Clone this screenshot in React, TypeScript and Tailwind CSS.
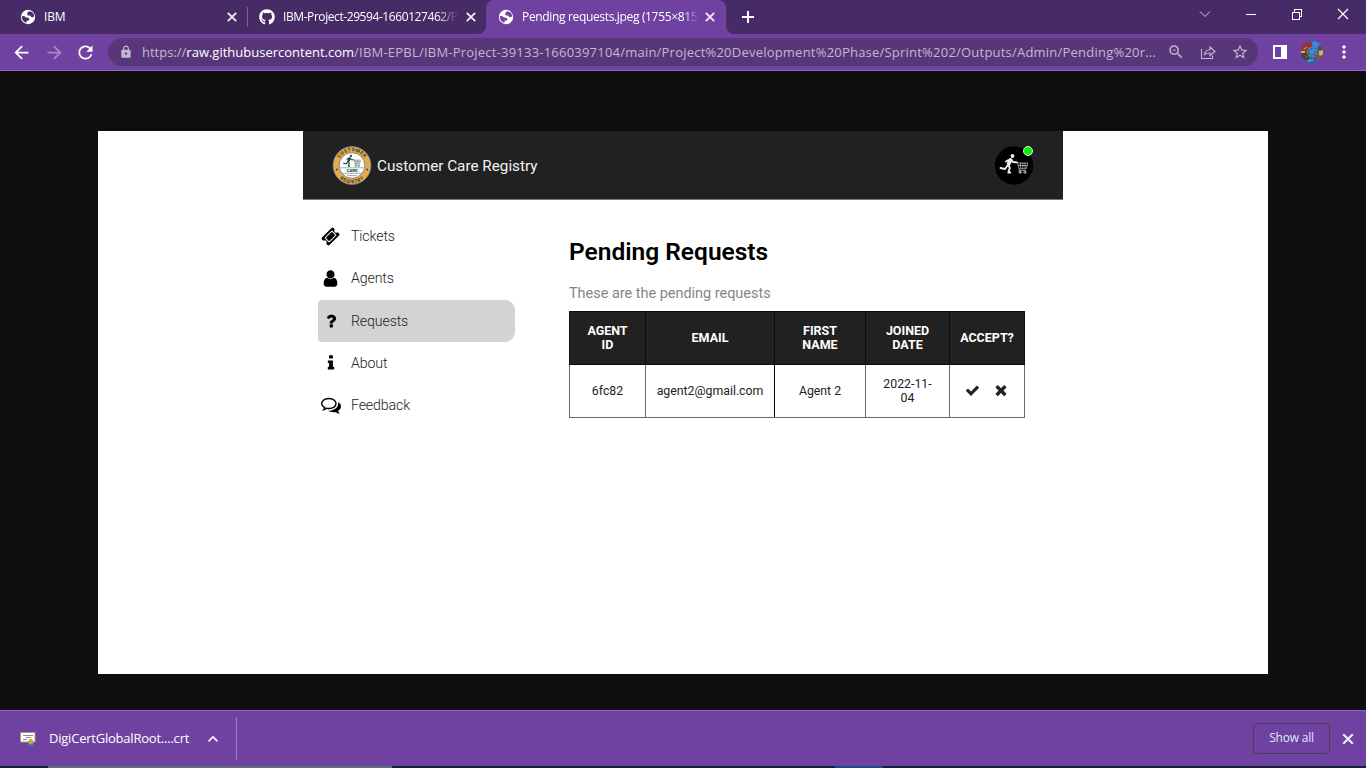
import React from "react";
import {
  MdArrowBack,
  MdArrowForward,
  MdRefresh,
  MdLock,
  MdStarBorder,
  MdZoomOut,
  MdMoreVert,
} from "react-icons/md";
import { FaGithub } from "react-icons/fa";

const ICONS = {
  check:
    "M1671 566q0 40-28 68l-724 724-136 136q-28 28-68 28t-68-28l-136-136-362-362q-28-28-28-68t28-68l136-136q28-28 68-28t68 28l294 295 656-657q28-28 68-28t68 28l136 136q28 28 28 68z",
  times:
    "M1490 1322q0 40-28 68l-136 136q-28 28-68 28t-68-28l-294-294-294 294q-28 28-68 28t-68-28l-136-136q-28-28-28-68t28-68l294-294-294-294q-28-28-28-68t28-68l136-136q28-28 68-28t68 28l294 294 294-294q28-28 68-28t68 28l136 136q28 28 28 68t-28 68l-294 294 294 294q28 28 28 68z",
  ticket:
    "M1024 452l316 316-572 572-316-316zm-211 979l618-618q19-19 19-45t-19-45l-362-362q-18-18-45-18t-45 18l-618 618q-19 19-19 45t19 45l362 362q18 18 45 18t45-18zm889-637l-907 908q-37 37-90.5 37t-90.5-37l-126-126q56-56 56-136t-56-136-136-56-136 56l-125-126q-37-37-37-90.5t37-90.5l907-906q37-37 90.5-37t90.5 37l125 125q-56 56-56 136t56 136 136 56 136-56l126 125q37 37 37 90.5t-37 90.5z",
  user:
    "M1536 1399q0 109-62.5 187t-150.5 78h-854q-88 0-150.5-78t-62.5-187q0-85 8.5-160.5t31.5-152 58.5-131 94-89 134.5-34.5q131 128 313 128t313-128q76 0 134.5 34.5t94 89 58.5 131 31.5 152 8.5 160.5zm-256-887q0 159-112.5 271.5t-271.5 112.5-271.5-112.5-112.5-271.5 112.5-271.5 271.5-112.5 271.5 112.5 112.5 271.5z",
  question:
    "M1088 1256v240q0 16-12 28t-28 12h-240q-16 0-28-12t-12-28v-240q0-16 12-28t28-12h240q16 0 28 12t12 28zm316-600q0 54-15.5 101t-35 76.5-55 59.5-57.5 43.5-61 35.5q-41 23-68.5 65t-27.5 67q0 17-12 32.5t-28 15.5h-240q-15 0-25.5-18.5t-10.5-37.5v-45q0-83 65-156.5t143-108.5q59-27 84-56t25-76q0-42-46.5-74t-107.5-32q-65 0-108 29-35 25-107 115-13 16-31 16-12 0-25-8l-164-125q-13-10-15.5-25t5.5-28q160-266 464-266 80 0 161 31t146 83 106 127.5 41 158.5z",
  info:
    "M1216 1344v128q0 26-19 45t-45 19h-512q-26 0-45-19t-19-45v-128q0-26 19-45t45-19h64v-384h-64q-26 0-45-19t-19-45v-128q0-26 19-45t45-19h384q26 0 45 19t19 45v576h64q26 0 45 19t19 45zm-128-1152v192q0 26-19 45t-45 19h-256q-26 0-45-19t-19-45v-192q0-26 19-45t45-19h256q26 0 45 19t19 45z",
  comments:
    "M704 384q-153 0-286 52t-211.5 141-78.5 191q0 82 53 158t149 132l97 56-35 84q34-20 62-39l44-31 53 10q78 14 153 14 153 0 286-52t211.5-141 78.5-191-78.5-191-211.5-141-286-52zm0-128q191 0 353.5 68.5t256.5 186.5 94 257-94 257-256.5 186.5-353.5 68.5q-86 0-176-16-124 88-278 128-36 9-86 16h-3q-11 0-20.5-8t-11.5-21q-1-3-1-6.5t.5-6.5 2-6l2.5-5 3.5-5.5 4-5 4.5-5 4-4.5q5-6 23-25t26-29.5 22.5-29 25-38.5 20.5-44q-124-72-195-177t-71-224q0-139 94-257t256.5-186.5 353.5-68.5zm822 1169q10 24 20.5 44t25 38.5 22.5 29 26 29.5 23 25q1 1 4 4.5t4.5 5 4 5 3.5 5.5l2.5 5 2 6 .5 6.5-1 6.5q-3 14-13 22t-22 7q-50-7-86-16-154-40-278-128-90 16-176 16-271 0-472-132 58 4 88 4 161 0 309-45t264-129q125-92 192-212t67-254q0-77-23-152 129 71 204 178t75 230q0 120-71 224.5t-195 176.5z",
};

function Icon({ name, className }: { name: keyof typeof ICONS; className: string }) {
  return (
    <svg viewBox="0 0 1792 1792" fill="currentColor" className={className}>
      <path d={ICONS[name]} />
    </svg>
  );
}

function Close({ className }: { className: string }) {
  return (
    <svg viewBox="0 0 14 14" className={className} stroke="#f2edf7" strokeWidth="1.800">
      <path d="M2.800 2.800l8.400 8.400M11.200 2.800l-8.400 8.400" />
    </svg>
  );
}

function Globe({ land }: { land: string }) {
  return (
    <svg viewBox="0 0 16 16" className="size-4 shrink-0">
      <circle cx="8" cy="8" r="7.200" fill="white" />
      <path
        fill={land}
        d="M7.800 3.300l1.500-1 2.500.7c1.700 1.300 2.300 2.800 2.400 4.300l-1.400.9-1.600-.1-1-1.500-2.300-.2-.8-1.400zM1.900 7.200l2.300-.1 1.700 1.500 2.300.2 1.300 1.500-.8 1.300-2 .2-.3 2C3.800 13 2 10.900 1.900 8.500z"
      />
    </svg>
  );
}

function TabStrip() {
  return (
    <div className="flex h-[34px] items-center bg-[#472b66] text-[12px] text-white">
      <div className="flex h-full w-[247px] items-center pl-[20px]">
        <Globe land="#472b66" />
        <span className="ml-[8px] grow tracking-[-0.200px]">IBM</span>
        <Close className="mr-[8px] size-[14px]" />
      </div>
      <div className="h-5 w-px bg-[#7b5e9c]" />
      <div className="flex h-full w-[238px] items-center pl-[11px]">
        <FaGithub className="size-4 shrink-0" />
        <span className="ml-2 w-[175px] whitespace-nowrap tracking-[-0.420px] [mask-image:linear-gradient(to_right,black_88%,transparent)]">
          IBM-Project-29594-1660127462/P
        </span>
        <Close className="ml-[6px] size-[14px] shrink-0" />
      </div>
      <div className="relative flex h-full w-[240px] items-center rounded-t-lg bg-[#6f42a1] pl-[12px]">
        <svg viewBox="0 0 8 8" className="absolute -left-2 bottom-0 size-2 fill-[#6f42a1]">
          <path d="M8 0v8H0a8 8 0 0 0 8-8z" />
        </svg>
        <svg viewBox="0 0 8 8" className="absolute -right-2 bottom-0 size-2 fill-[#6f42a1]">
          <path d="M0 0v8h8a8 8 0 0 1-8-8z" />
        </svg>
        <Globe land="#6f42a1" />
        <span className="ml-2 w-[176px] whitespace-nowrap tracking-[-0.340px] [mask-image:linear-gradient(to_right,black_92%,transparent)]">
          Pending requests.jpeg (1755×815
        </span>
        <Close className="ml-[5px] size-[14px] shrink-0" />
      </div>
      <svg viewBox="0 0 12 12" className="ml-[16px] size-3 stroke-white" strokeWidth="2">
        <path d="M6 0v12M0 6h12" />
      </svg>
      <div className="ml-auto flex items-center">
        <svg viewBox="0 0 12 12" className="mr-[34px] size-3 -translate-y-[3px] fill-none stroke-[#d5cbe0]" strokeWidth="1">
          <path d="M1 3.500l5 5 5-5" />
        </svg>
        <svg viewBox="0 0 12 12" className="mr-[34px] size-3 -translate-y-[3px] fill-none stroke-white" shapeRendering="crispEdges">
          <path d="M1 6.500h10" />
        </svg>
        <svg viewBox="0 0 12 12" className="mr-[34px] size-3 -translate-y-[3px] fill-none stroke-white" shapeRendering="crispEdges">
          <path d="M1.500 4.500h7v7h-7zM3.500 4v-2.500h7v7h-2" />
        </svg>
        <svg viewBox="0 0 12 12" className="mr-[17px] size-3 -translate-y-[3px] fill-none stroke-white" strokeWidth="1.200">
          <path d="M1 1l10 10M11 1L1 11" />
        </svg>
      </div>
    </div>
  );
}

function Toolbar() {
  return (
    <div className="flex h-[37px] items-center border-b border-[#9068ba] bg-[#6f42a1] text-white">
      <MdArrowBack className="ml-[11px] size-[21px]" />
      <MdArrowForward className="ml-[12px] size-[21px] text-[#a68ac6]" />
      <MdRefresh className="ml-[10px] size-[21px]" />
      <div className="ml-[12px] flex h-[28px] w-[1150px] items-center rounded-full bg-[#573779] text-[#c3b7d0]">
        <MdLock className="ml-[11px] size-[14px]" />
        <span className="ml-[9px] w-[1019px] whitespace-nowrap pt-px text-[13px] tracking-[0.218px]">
          <span className="tracking-[0px]">https://<span className="text-white">raw.githubusercontent.com</span></span>
          /IBM-EPBL/IBM-Project-39133-1660397104/main/Project%20Development%20Phase/Sprint%202/Outputs/Admin/Pending%20r...
        </span>
        <MdZoomOut className="ml-[6px] size-[18px] shrink-0" />
        <svg viewBox="0 0 16 16" className="ml-[15px] size-4 shrink-0 fill-none stroke-current" strokeWidth="1.100">
          <path d="M1.500 5v9.500h11V11.500M4.500 10.500c.5-3 2.300-4.700 5.500-4.800V3l5 4.500-5 4V9c-2.500 0-4 .4-5.500 1.500z" />
        </svg>
        <MdStarBorder className="ml-[15px] size-[18px] shrink-0" />
      </div>
      <svg viewBox="0 0 14 14" className="ml-[15px] size-[14px]" shapeRendering="crispEdges">
        <path d="M0 0h14v14H0zM2 2v10h6V2z" fill="white" fillRule="evenodd" />
      </svg>
      <svg viewBox="0 0 22 22" className="ml-[14px] size-[22px]">
        <clipPath id="avatar"><circle cx="11" cy="11" r="11" /></clipPath>
        <g clipPath="url(#avatar)">
          <path fill="#2667ad" d="M0 0h22v22H0z" />
          <path fill="#a52d22" d="M0 3l7-3 5 4-3 3-2 5-7 1z" />
          <path fill="#338be8" d="M12 0h6l2 6-6 1-3-3z" />
          <path fill="#7a3a34" d="M17 4l5 2v4l-4-1z" />
          <path fill="#314a35" d="M0 12l7-1 3 4-4 4-6-1z" />
          <path fill="#c9bd3b" d="M18 10l4-1v5l-4 1zM0 10h4v2H0z" />
          <path fill="#a04434" d="M13 16l5-2 3 2-3 4zM3 14l4 1-1 3z" />
          <circle cx="11" cy="11" r="4.500" fill="none" stroke="#827a70" strokeWidth="2" strokeDasharray="3 1" />
          <path fill="#2d91f1" d="M8 9l6-1-1 5-4 1z" />
          <path stroke="#49b6cf" strokeWidth="1.500" d="M7 20l5-1M3 8l3-2" />
        </g>
      </svg>
      <MdMoreVert className="ml-[11px] size-[20px]" />
    </div>
  );
}

function Runner() {
  return (
    <g fill="none" strokeLinecap="round" strokeLinejoin="round">
      <circle cx="18.500" cy="11" r="1.900" fill="currentColor" />
      <path stroke="currentColor" strokeWidth="4" d="M16.500 15l-1.700 3.500" />
      <path stroke="currentColor" strokeWidth="1.900" d="M14.500 20l1.300 3-1.500 4.500h2M13.500 20.500l-2.500 3.500-4.500-1M17.500 15.500l1.500 1.500 3.500.3M14.500 15l-2.500 1.500" />
      <path stroke="currentColor" strokeOpacity=".8" strokeWidth=".7" d="M22 17.500h1.500l1.500 6.300h7.200l1.600-5.800h-10M24.500 20.500h8.700M26.500 18v5.500M28.800 18v5.500M31 18v5.500M25 24v1.500h6.800" />
      <circle cx="26" cy="27.300" r="1" strokeWidth=".8" stroke="currentColor" />
      <circle cx="30.800" cy="27.300" r="1" strokeWidth=".8" stroke="currentColor" />
    </g>
  );
}

function RegistryLogo() {
  return (
    <svg viewBox="0 0 40 40" className="size-[40px]">
      <circle cx="20" cy="20.500" r="18.800" fill="#e5ab51" stroke="#8a9a8a" strokeWidth="1" />
      <circle cx="20" cy="20.500" r="12.800" fill="#fff" stroke="#486a62" strokeWidth=".7" />
      <path id="arc-top" d="M5.700 20.500a14.300 14.300 0 0 1 28.600 0" fill="none" />
      <path id="arc-bottom" d="M2.300 20.500a17.700 17.700 0 0 0 35.400 0" fill="none" />
      <g fill="#4b4523" fontFamily="Roboto, sans-serif" fontWeight="900" fontSize="4.800" textAnchor="middle">
        <text letterSpacing=".5"><textPath href="#arc-top" startOffset="50%">CUSTOMER</textPath></text>
        <text letterSpacing=".5"><textPath href="#arc-bottom" startOffset="50%">REGISTRY</textPath></text>
        <text x="20" y="27.300" fontSize="4.400" fill="#244b47">CARE</text>
      </g>
      <circle cx="4.800" cy="24.500" r=".9" fill="#4b4523" />
      <circle cx="35.200" cy="24.500" r=".9" fill="#4b4523" />
      <g transform="translate(7.500 4) scale(.62)" className="text-[#244b47]">
        <Runner />
      </g>
      <path d="M8.500 22.800h23M10 28.300h20M15 30.600h10" stroke="#6f8c86" strokeWidth=".7" />
    </svg>
  );
}

function Header() {
  return (
    <header className="flex h-[69px] items-center border-b border-[#777] bg-[#212121] pl-[29px] pr-[29px]">
      <RegistryLogo />
      <span className="ml-[5px] pt-[2px] text-[15.300px] tracking-[-0.020px] text-[#f2f2f2]">Customer Care Registry</span>
      <div className="relative ml-auto size-[40px]">
        <svg viewBox="0 0 40 40" className="size-[40px] text-[#eee]">
          <circle cx="20" cy="20.500" r="19.200" fill="#000" />
          <Runner />
        </svg>
        <span className="absolute right-px top-px size-[10px] rounded-full border border-[#d9f5d9] bg-[#0bf00b]" />
      </div>
    </header>
  );
}

const NAV: { label: string; icon: keyof typeof ICONS; size: string }[] = [
  { label: "Tickets", icon: "ticket", size: "size-[19px]" },
  { label: "Agents", icon: "user", size: "size-[19px]" },
  { label: "Requests", icon: "question", size: "size-[18px]" },
  { label: "About", icon: "info", size: "size-[18px]" },
  { label: "Feedback", icon: "comments", size: "size-[20px]" },
];

function Sidebar() {
  return (
    <nav className="ml-[15px] mt-[15px] flex w-[197px] flex-col">
      {NAV.map((item) => (
        <div
          key={item.label}
          className={`flex h-[42.300px] items-center rounded-l-[4px] rounded-r-[10px] ${item.label === "Requests" ? "bg-[#d3d3d3]" : ""}`}
        >
          <span className="flex w-[25px] justify-center text-black">
            <Icon name={item.icon} className={item.size} />
          </span>
          <span className="ml-[8px] pt-px text-[14.200px] font-light tracking-[-0.150px] text-[#222]">{item.label}</span>
        </div>
      ))}
    </nav>
  );
}

function RequestsTable() {
  return (
    <table className="mt-[8px] w-[455px] table-fixed border-collapse text-center text-[12.300px] leading-[14.500px] text-[#222]">
      <colgroup>
        <col className="w-[76px]" />
        <col className="w-[129px]" />
        <col className="w-[91px]" />
        <col className="w-[84px]" />
        <col className="w-[75px]" />
      </colgroup>
      <thead>
        <tr className="h-[53px] bg-[#212121] text-[12.500px] text-white [&>th]:border [&>th]:border-[#0c0c0c] [&>th]:font-bold">
          <th>AGENT<br />ID</th>
          <th>EMAIL</th>
          <th>FIRST<br />NAME</th>
          <th>JOINED<br />DATE</th>
          <th>ACCEPT?</th>
        </tr>
      </thead>
      <tbody>
        <tr className="h-[53px] [&>td]:border [&>td]:border-[#666]">
          <td>6fc82</td>
          <td className="!border-r-black">agent2@gmail.com</td>
          <td>Agent 2</td>
          <td>2022-11-<br />04</td>
          <td>
            <div className="flex -translate-y-px items-center justify-center gap-[13px]">
              <Icon name="check" className="size-[15px]" />
              <Icon name="times" className="size-[16px]" />
            </div>
          </td>
        </tr>
      </tbody>
    </table>
  );
}

function Page() {
  return (
    <div className="mx-auto h-[543px] w-[1170px] bg-white font-['Roboto',sans-serif]">
      <div className="mx-auto w-[760px]">
        <Header />
        <div className="flex">
          <Sidebar />
          <main className="ml-[54px] mt-[36px]">
            <h1 className="text-[24.500px] font-semibold leading-[32px] text-black">Pending Requests</h1>
            <p className="mt-[16px] text-[14.450px] leading-[20px] text-[#858585]">These are the pending requests</p>
            <div className="-mt-px">
              <RequestsTable />
            </div>
          </main>
        </div>
      </div>
    </div>
  );
}

function DownloadBar() {
  return (
    <div className="flex h-[56px] items-center border-t border-[#9068ba] bg-[#6f42a1] text-white">
      <svg viewBox="0 0 16 14" className="ml-[20px] h-[14px] w-4">
        <path fill="#fff" stroke="#b09a68" d="M.5.500h14.500v9.500H.5z" />
        <path stroke="#7e87ad" d="M3 3.500h10M6 5.500h5M3 7.500h4" />
        <path stroke="#2685ed" strokeWidth="2" d="M9.500 10v4M12 10v4" />
        <circle cx="10.700" cy="9.500" r="2.500" fill="#dda316" />
      </svg>
      <span className="ml-[13px] w-[141px] whitespace-nowrap text-[13px] tracking-[-0.220px]">DigiCertGlobalRoot....crt</span>
      <svg viewBox="0 0 18 18" className="ml-[14px] size-[18px] fill-none stroke-[#eee6f7]" strokeWidth="1.900">
        <path d="M4.500 11.300L9 6.800l4.500 4.500" />
      </svg>
      <div className="ml-[14px] h-[43px] w-px bg-[#9f80bf]" />
      <button className="ml-auto h-[31px] w-[77px] rounded-[4px] border border-[#493e58] pb-[2px] text-[12px] tracking-[-0.200px] text-[#dceaff]">
        Show all
      </button>
      <Close className="ml-[10px] mr-[10px] size-[16px]" />
    </div>
  );
}

export default function App() {
  return (
    <div className="flex h-[768px] w-[1366px] flex-col overflow-hidden bg-[#0e0e0e] font-['Open_Sans','Noto_Sans',sans-serif]">
      <TabStrip />
      <Toolbar />
      <div className="h-[639px] pt-[60px]">
        <Page />
      </div>
      <DownloadBar />
      <div className="flex h-[2px] bg-[#10223a]">
        <div className="ml-[48px] w-[344px] bg-[#5f6e78]" />
        <div className="ml-[443px] w-[48px] bg-[#174b8b]" />
      </div>
    </div>
  );
}
